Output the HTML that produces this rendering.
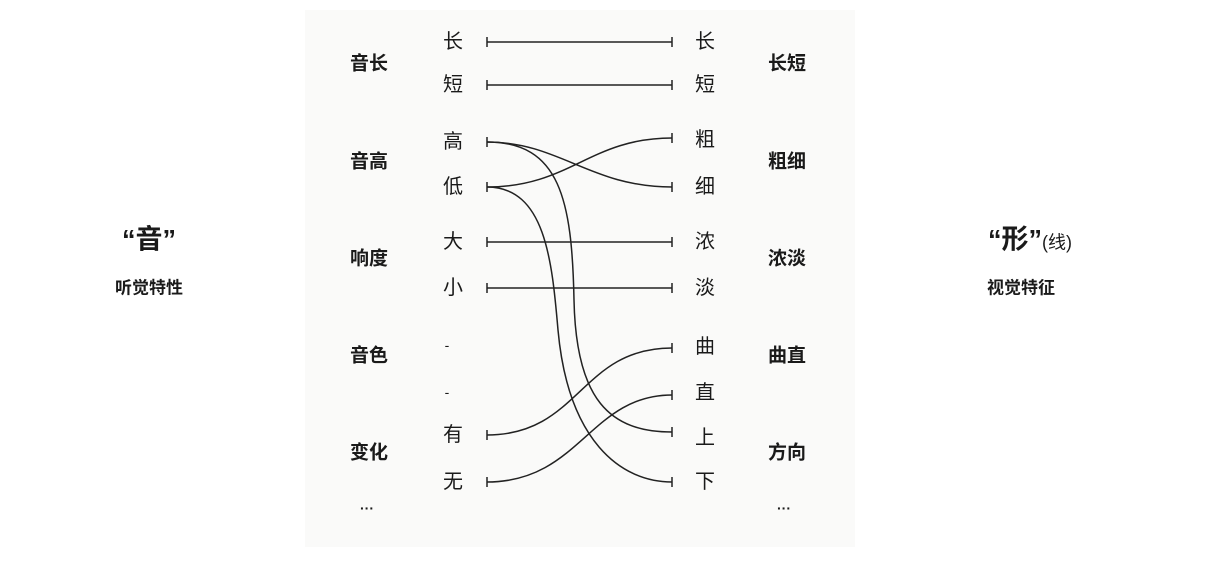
<!DOCTYPE html>
<html><head><meta charset="utf-8"><style>
html,body{margin:0;padding:0;background:#fff;}
body{width:1217px;height:577px;position:relative;overflow:hidden;font-family:"Liberation Sans","Noto Sans CJK SC",sans-serif;color:#1a1a1a;}
.t{position:absolute;white-space:nowrap;line-height:1;transform:translate(-50%,-50%);}
.b{font-weight:bold;font-size:19px;}
.n{font-size:20px;}
</style></head><body>
<div style="position:absolute;left:305px;top:10px;width:550px;height:537px;background:#fafaf9;"></div>
<svg style="position:absolute;left:0;top:0" width="1217" height="577" fill="none" stroke="#222" stroke-width="1.5">
<g>
<path d="M487 42H672M487 85H672M487 242H672M487 288H672"/>
<path d="M487 37v10M672 37v10M487 80v10M672 80v10M487 237v10M672 237v10M487 283v10M672 283v10"/>
<path d="M487 137v10M487 182v10M672 133v10M672 182v10M487 430v10M487 477v10M672 343v10M672 390v10M672 427v10M672 477v10"/>
<path d="M487 142C560 142,590 187,672 187"/>
<path d="M487 187C570 187,590 138,672 138"/>
<path d="M487 142C560 142,572 200,574 300C576 400,610 432,672 432"/>
<path d="M487 187C545 187,552 260,558 330C568 440,620 482,672 482"/>
<path d="M487 435C580 435,580 348,672 348"/>
<path d="M487 482C580 482,590 395,672 395"/>
</g>
</svg>
<div class="t n" style="left:453px;top:42px">长</div>
<div class="t n" style="left:453px;top:85px">短</div>
<div class="t n" style="left:453px;top:142px">高</div>
<div class="t n" style="left:453px;top:187px">低</div>
<div class="t n" style="left:453px;top:242px">大</div>
<div class="t n" style="left:453px;top:288px">小</div>
<div class="t n" style="left:447px;top:345px;font-size:14px">-</div>
<div class="t n" style="left:447px;top:392px;font-size:14px">-</div>
<div class="t n" style="left:453px;top:435px">有</div>
<div class="t n" style="left:453px;top:482px">无</div>
<div class="t n" style="left:705px;top:42px">长</div>
<div class="t n" style="left:705px;top:85px">短</div>
<div class="t n" style="left:705px;top:140px">粗</div>
<div class="t n" style="left:705px;top:187px">细</div>
<div class="t n" style="left:705px;top:242px">浓</div>
<div class="t n" style="left:705px;top:288px">淡</div>
<div class="t n" style="left:705px;top:347px">曲</div>
<div class="t n" style="left:705px;top:393px">直</div>
<div class="t n" style="left:705px;top:438px">上</div>
<div class="t n" style="left:705px;top:482px">下</div>
<div class="t b" style="left:369px;top:64px">音长</div>
<div class="t b" style="left:369px;top:162px">音高</div>
<div class="t b" style="left:369px;top:259px">响度</div>
<div class="t b" style="left:369px;top:356px">音色</div>
<div class="t b" style="left:369px;top:453px">变化</div>
<div class="t b" style="left:367px;top:508px;font-size:14px">···</div>
<div class="t b" style="left:787px;top:64px">长短</div>
<div class="t b" style="left:787px;top:162px">粗细</div>
<div class="t b" style="left:787px;top:259px">浓淡</div>
<div class="t b" style="left:787px;top:356px">曲直</div>
<div class="t b" style="left:787px;top:453px">方向</div>
<div class="t b" style="left:784px;top:508px;font-size:14px">···</div>
<div class="t b" style="left:149px;top:240px;font-size:27px">“音”</div>
<div class="t b" style="left:149px;top:288px;font-size:17px">听觉特性</div>
<div class="t b" style="left:1030px;top:240px;font-size:27px">“形”<span style="font-size:18px;font-weight:normal">(线)</span></div>
<div class="t b" style="left:1021px;top:288px;font-size:17px">视觉特征</div>
</body></html>
